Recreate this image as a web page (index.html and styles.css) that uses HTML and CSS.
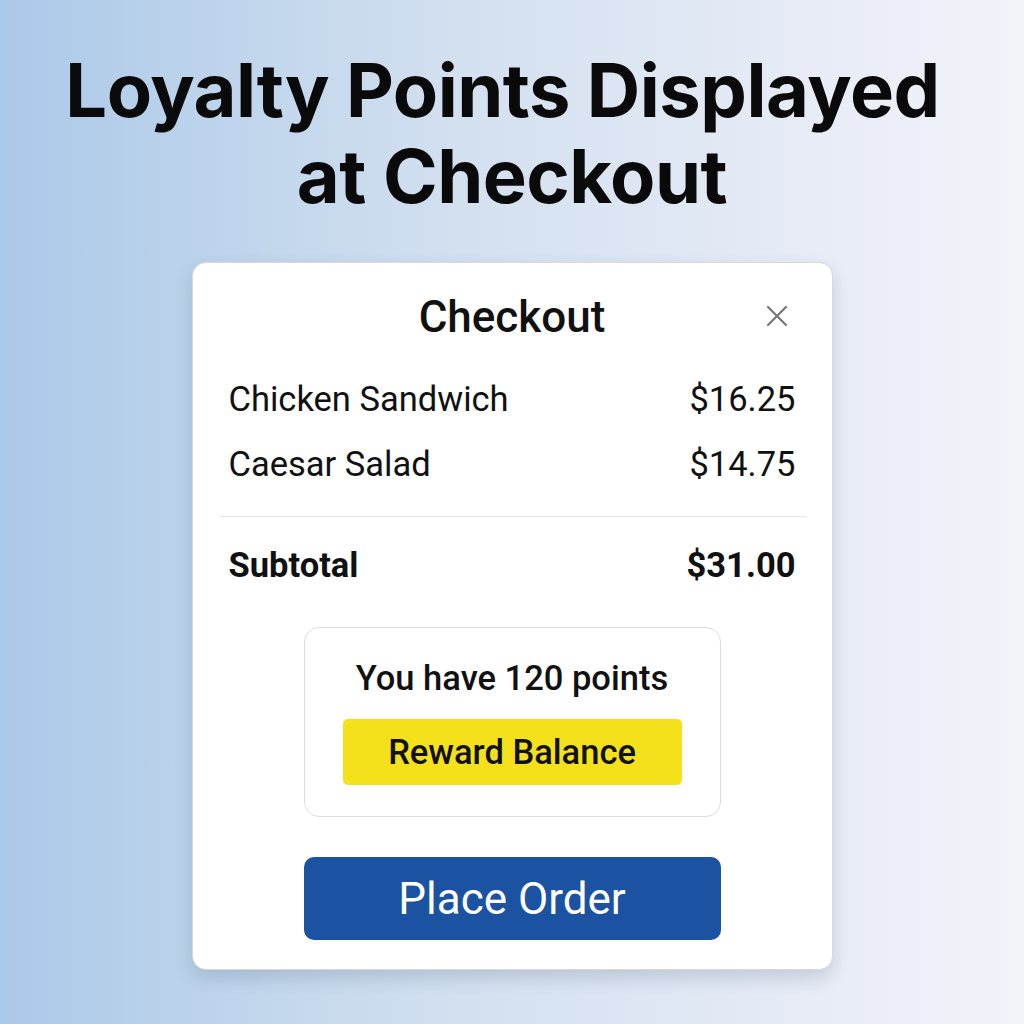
FILE: index.html
```html
<!DOCTYPE html>
<html>
<head>
<meta charset="utf-8">
<link rel="stylesheet" href="styles.css">
</head>
<body>
<main class="page">
  <h1 class="headline"><span class="line line-first">Loyalty Points Displayed</span><span class="line">at Checkout</span></h1>
  <section class="card">
    <header class="card-head">
      <h2 class="card-title">Checkout</h2>
      <button class="close" aria-label="Close">
        <svg width="22" height="22" viewBox="0 0 22 22"><path d="M2 2 L20 20 M20 2 L2 20" stroke="#777" stroke-width="2.2" stroke-linecap="round" fill="none"/></svg>
      </button>
    </header>
    <div class="items">
      <div class="row"><span>Chicken Sandwich</span><span>$16.25</span></div>
      <div class="row"><span>Caesar Salad</span><span>$14.75</span></div>
    </div>
    <hr class="divider">
    <div class="row total"><span>Subtotal</span><span>$31.00</span></div>
    <div class="points">
      <p class="points-text">You have 120 points</p>
      <div class="reward">Reward Balance</div>
    </div>
    <button class="order">Place Order</button>
  </section>
</main>
</body>
</html>
```
FILE: styles.css
```css
* { box-sizing: border-box; }
html, body { margin: 0; padding: 0; }
body {
  width: 1024px;
  height: 1024px;
  overflow: hidden;
  background: linear-gradient(90deg, #abc9e8 0%, #d3e0f0 45%, #f3f3fa 100%);
  font-family: Roboto, "Noto Sans", sans-serif;
  color: #111;
}
.page {
  display: flex;
  flex-direction: column;
  align-items: center;
}
.headline {
  margin: 47px 0 0;
  font-family: Inter, "Noto Sans", sans-serif;
  font-weight: 700;
  font-size: 74px;
  line-height: 86px;
  letter-spacing: -0.5px;
  text-align: center;
  color: #0a0a0a;
  display: flex;
  flex-direction: column;
  align-items: center;
}
.line { display: block; }
.line-first { padding-right: 19px; }
.card {
  margin-top: 43px;
  width: 641px;
  height: 708px;
  background: #fff;
  border: 1px solid #d6d9de;
  border-radius: 14px;
  box-shadow: 0 8px 18px rgba(40, 60, 90, 0.18);
  padding: 27px 26px 0;
  display: flex;
  flex-direction: column;
  align-items: stretch;
}
.card-head {
  position: relative;
  display: flex;
  justify-content: center;
  align-items: center;
  height: 54px;
}
.card-title {
  margin: 0;
  font-size: 44px;
  font-weight: 500;
  color: #111;
}
.close {
  position: absolute;
  right: 18px;
  top: 15px;
  background: none;
  border: 0;
  padding: 0;
  width: 22px;
  height: 22px;
}
.items { margin-top: 22px; }
.row {
  display: flex;
  justify-content: space-between;
  align-items: center;
  padding: 0 10px;
  height: 65px;
  font-size: 34.5px;
  color: #111;
}
.divider {
  margin: 20px 0 0;
  border: 0;
  border-top: 1.5px solid #e6e6e6;
}
.total {
  margin-top: 15px;
  font-weight: 700;
}
.points {
  align-self: center;
  margin-top: 30px;
  width: 417px;
  height: 190px;
  border: 1.5px solid #dcdcdc;
  border-radius: 15px;
  display: flex;
  flex-direction: column;
  align-items: center;
  padding-top: 30px;
}
.points-text {
  margin: 0;
  font-size: 34.5px;
  font-weight: 500;
  line-height: 40px;
}
.reward {
  margin-top: 21px;
  width: 339px;
  height: 66px;
  background: #f5e11b;
  border-radius: 5px;
  display: flex;
  justify-content: center;
  align-items: center;
  font-size: 34.5px;
  font-weight: 500;
  color: #111;
}
.order {
  align-self: center;
  margin-top: 40px;
  width: 417px;
  height: 83px;
  background: #1b52a1;
  color: #fff;
  border: 0;
  border-radius: 10px;
  font-family: Roboto, "Noto Sans", sans-serif;
  font-size: 44px;
  font-weight: 400;
}
```
